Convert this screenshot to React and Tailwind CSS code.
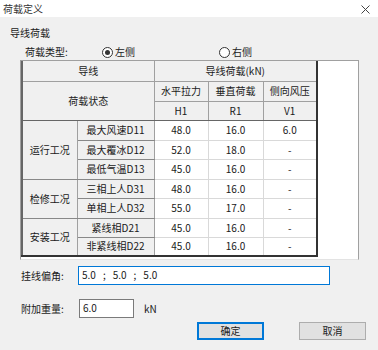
import React from 'react';

const font = { fontFamily: '"Noto Sans CJK SC", "Liberation Sans", sans-serif' };

const rows = [
  { group: '运行工况', span: 3, name: '最大风速D11', h: '48.0', r: '16.0', v: '6.0', ht: 'h-[20px]' },
  { name: '最大覆冰D12', h: '52.0', r: '18.0', v: '-', ht: 'h-[19px]' },
  { name: '最低气温D13', h: '45.0', r: '16.0', v: '-', ht: 'h-[20px]' },
  { group: '检修工况', span: 2, name: '三相上人D31', h: '48.0', r: '16.0', v: '-', ht: 'h-[19px]' },
  { name: '单相上人D32', h: '55.0', r: '17.0', v: '-', ht: 'h-[20px]' },
  { group: '安装工况', span: 2, name: '紧线相D21', h: '45.0', r: '16.0', v: '-', ht: 'h-[19px]' },
  { name: '非紧线相D22', h: '45.0', r: '16.0', v: '-', ht: 'h-[19px]' },
];

const Radio = ({ checked, label }) => (
  <div className="flex items-center gap-[2px]">
    <span className="w-[11px] h-[11px] rounded-full border border-[#333] bg-white flex items-center justify-center">
      {checked && <span className="w-[5px] h-[5px] rounded-full bg-[#333]" />}
    </span>
    <span className="leading-[16px] text-[#222]">{label}</span>
  </div>
);

const gh = 'border border-[#a0a0a0] bg-[#f0f0f0] text-center font-normal p-0';
const wc = 'border border-[#d9d9d9] bg-white text-center p-0';

export default function App() {
  return (
    <div className="w-[378px] h-[350px] bg-[#f0f0f0] text-[#1a1a1a] text-[10px] overflow-hidden" style={font}>
      {/* title bar */}
      <div className="h-[17px] bg-white flex items-center justify-between pl-[3px] pr-[8px]">
        <span className="leading-[16px] text-[#333]">荷载定义</span>
        <svg width="9" height="9" viewBox="0 0 9 9" className="mt-[2px]">
          <path d="M0.5 0.5 L8.5 8.5 M8.5 0.5 L0.5 8.5" stroke="#444" strokeWidth="1" />
        </svg>
      </div>

      <div className="pl-[10px] mt-[8px] leading-[16px]">导线荷载</div>

      <div className="flex items-center h-[16px] mt-[3px]">
        <span className="ml-[25px] w-[77px] leading-[16px]">荷载类型:</span>
        <div className="w-[117px]"><Radio checked label="左侧" /></div>
        <Radio label="右侧" />
      </div>

      {/* table frame */}
      <div className="ml-[20px] w-[339px] h-[200px] border border-[#a0a0a0] border-b-[#e3e3e3] bg-white">
        <table className="border-collapse table-fixed border-l-2 border-l-[#666] border-r-2 border-r-[#333] border-b-2 border-b-[#333] leading-[16px]">
          <colgroup>
            <col className="w-[55px]" />
            <col className="w-[77px]" />
            <col className="w-[54px]" />
            <col className="w-[55px]" />
            <col className="w-[54px]" />
          </colgroup>
          <thead>
            <tr className="h-[20px]">
              <th colSpan={2} className={gh + ' border-t-0'}>导线</th>
              <th colSpan={3} className={gh + ' border-t-0'}>导线荷载(kN)</th>
            </tr>
            <tr className="h-[20px]">
              <th colSpan={2} rowSpan={2} className={gh + ' border-b-[#666]'}>荷载状态</th>
              <th className={gh}>水平拉力</th>
              <th className={gh}>垂直荷载</th>
              <th className={gh}>侧向风压</th>
            </tr>
            <tr className="h-[19px]">
              <th className={gh + ' border-b-[#666]'}>H1</th>
              <th className={gh + ' border-b-[#666]'}>R1</th>
              <th className={gh + ' border-b-[#666]'}>V1</th>
            </tr>
          </thead>
          <tbody>
            {rows.map((r, i) => (
              <tr key={i} className={r.ht}>
                {r.group && (
                  <td rowSpan={r.span} className={gh + ' border-b-[#888]'}>{r.group}</td>
                )}
                <td className={gh + ' border-b-[#888]'}>{r.name}</td>
                <td className={wc}>{r.h}</td>
                <td className={wc}>{r.r}</td>
                <td className={wc}>{r.v}</td>
              </tr>
            ))}
          </tbody>
        </table>
      </div>

      <div className="flex items-center mt-[6px] h-[19px]">
        <span className="ml-[21px] w-[57px] leading-[16px]">挂线偏角:</span>
        <div className="w-[252px] h-[19px] border border-[#0078d7] bg-white pl-[3px] leading-[16px] flex">
          <span>5.0</span>
          <span className="mx-[7px]">;</span>
          <span>5.0</span>
          <span className="mx-[7px]">;</span>
          <span>5.0</span>
        </div>
      </div>

      <div className="flex items-center mt-[14px] h-[19px]">
        <span className="ml-[21px] w-[58px] leading-[16px]">附加重量:</span>
        <div className="w-[55px] h-[19px] border border-[#7a7a7a] bg-white pl-[3px] leading-[16px]">6.0</div>
        <span className="ml-[10px] leading-[16px]">kN</span>
      </div>

      <div className="flex mt-[4px]">
        <div className="ml-[197px] w-[67px] h-[18px] border-2 border-[#0078d7] bg-[#e1e1e1] flex items-center justify-center leading-[14px]">确定</div>
        <div className="ml-[35px] w-[67px] h-[18px] border border-[#adadad] bg-[#e1e1e1] flex items-center justify-center leading-[14px]">取消</div>
      </div>
    </div>
  );
}
